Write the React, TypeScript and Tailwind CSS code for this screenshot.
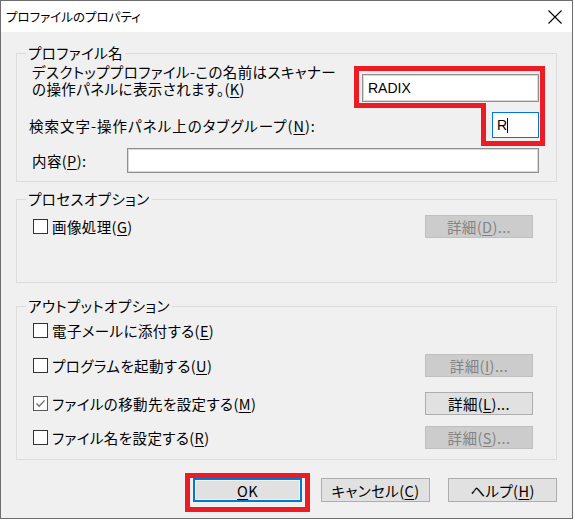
import type { ReactNode } from "react";

const font = "font-['Noto_Sans_CJK_JP','Noto_Sans',sans-serif] [font-feature-settings:'palt']";
const txt = "text-[14.5px] leading-[17px] tracking-[0.4px]";

const Mn = ({ children }: { children: ReactNode }) => (
  <u className="underline underline-offset-2 decoration-1">{children}</u>
);

const Check = ({ checked = false }: { checked?: boolean }) => (
  <span
    className={
      checked
        ? "w-[15px] h-[15px] border border-[#5a5a5a] bg-white flex items-center justify-center shrink-0"
        : "w-[15px] h-[15px] border border-[#333333] bg-white flex items-center justify-center shrink-0"
    }
  >
    {checked && (
      <svg width="11" height="11" viewBox="0 0 11 11">
        <path d="M1.5 5.5 L4.2 8.3 L9.6 2.4" fill="none" stroke="#707070" strokeWidth="1.4" />
      </svg>
    )}
  </span>
);

const DetailButton = ({ children, disabled = false }: { children: ReactNode; disabled?: boolean }) => (
  <button
    className={
      disabled
        ? "w-[108px] h-[23px] border border-[#bfbfbf] bg-[#cccccc] text-[#838383] flex items-center justify-center " + txt
        : "w-[108px] h-[23px] border border-[#adadad] bg-[#e1e1e1] text-black flex items-center justify-center " + txt
    }
  >
    {children}
  </button>
);

const OptionRow = ({
  label,
  checked,
  button,
  className,
}: {
  label: ReactNode;
  checked?: boolean;
  button?: ReactNode;
  className: string;
}) => (
  <div className={"h-[23px] flex items-center justify-between pl-[16px] pr-[23px] " + className}>
    <div className="flex items-center">
      <Check checked={checked} />
      <span className={"ml-[4px] " + txt}>{label}</span>
    </div>
    {button}
  </div>
);

const Legend = ({ children }: { children: ReactNode }) => (
  <legend className="ml-[9px] px-[2px] h-[16px] text-[14.5px] leading-[16px] tracking-[0.4px]">{children}</legend>
);

export default function App() {
  return (
    <div className={"relative w-[575px] h-[520px] bg-white text-black " + font}>
      <div className="w-[573px] h-[519px] border border-[#6d6d6d] bg-[#f0f0f0] flex flex-col">
        <div className="h-[31px] bg-white flex items-center justify-between pl-[5px] pr-[10px]">
          <span className="text-[12.5px] leading-[16px]">プロファイルのプロパティ</span>
          <svg width="14" height="14" viewBox="0 0 14 14">
            <path d="M0.5 0.5 L13.5 13.5 M13.5 0.5 L0.5 13.5" stroke="#000" strokeWidth="1.1" />
          </svg>
        </div>

        <div className="flex flex-col px-[15px]">
          <fieldset className="mt-[13px] border border-[#dcdcdc] pb-[8px]">
            <Legend>プロファイル名</Legend>
            <div className="pl-[15px] pr-[17px]">
              <div className="mt-[2px] flex items-start justify-between">
                <div className={txt}>
                  <div>デスクトッププロファイル-この名前はスキャナー</div>
                  <div>
                    の操作パネルに表示されます。(<Mn>K</Mn>)
                  </div>
                </div>
                <div className="mt-[11px] w-[177px] h-[28px] border border-[#8f8f8f] bg-white shadow-[inset_0_0_0_1px_#d9d9d9] flex items-center pl-[5px] font-['Liberation_Sans',sans-serif] text-[14px] tracking-normal">
                  RADIX
                </div>
              </div>
              <div className="mt-[10px] h-[26px] flex items-center justify-between">
                <span className="-ml-[3px] text-[14.5px] leading-[17px] tracking-[1px]">
                  検索文字-操作パネル上のタブグループ(<Mn>N</Mn>):
                </span>
                <div className="w-[47px] h-[26px] border border-[#0078d7] bg-white flex items-center pl-[4px] font-['Liberation_Sans',sans-serif] text-[14px]">
                  R<span className="w-px h-[15px] bg-black" />
                </div>
              </div>
              <div className="mt-[10px] h-[25px] flex items-center justify-between">
                <span className={txt}>
                  内容(<Mn>P</Mn>):
                </span>
                <div className="w-[412px] h-[25px] border border-[#8f8f8f] bg-white shadow-[inset_0_0_0_1px_#d9d9d9]" />
              </div>
            </div>
          </fieldset>

          <fieldset className="mt-[9px] border border-[#dcdcdc] pb-[44px]">
            <Legend>プロセスオプション</Legend>
            <OptionRow
              className="mt-[8px]"
              label={<>画像処理(<Mn>G</Mn>)</>}
              button={<DetailButton disabled>詳細(<Mn>D</Mn>)...</DetailButton>}
            />
          </fieldset>

          <fieldset className="mt-[15px] border border-[#dcdcdc] pb-[10px]">
            <Legend>アウトプットオプション</Legend>
            <OptionRow className="mt-[5px]" label={<>電子メールに添付する(<Mn>E</Mn>)</>} />
            <OptionRow
              className="mt-[12px]"
              label={<>プログラムを起動する(<Mn>U</Mn>)</>}
              button={<DetailButton disabled>詳細(<Mn>I</Mn>)...</DetailButton>}
            />
            <OptionRow
              className="mt-[15px]"
              checked
              label={<>ファイルの移動先を設定する(<Mn>M</Mn>)</>}
              button={<DetailButton>詳細(<Mn>L</Mn>)...</DetailButton>}
            />
            <OptionRow
              className="mt-[11px]"
              label={<>ファイル名を設定する(<Mn>R</Mn>)</>}
              button={<DetailButton disabled>詳細(<Mn>S</Mn>)...</DetailButton>}
            />
          </fieldset>
        </div>

        <div className="mt-[18px] flex justify-end pr-[15px] gap-[19px]">
          <button className={"w-[109px] h-[24px] border-2 border-[#0078d7] bg-[#e1e1e1] shadow-[inset_0_0_0_1px_#f2f2f2] flex items-center justify-center " + txt}>
            <Mn>O</Mn>K
          </button>
          <button className={"w-[109px] h-[24px] border border-[#adadad] bg-[#e1e1e1] flex items-center justify-center " + txt}>
            キャンセル(<Mn>C</Mn>)
          </button>
          <button className={"-ml-[1px] w-[109px] h-[24px] border border-[#adadad] bg-[#e1e1e1] flex items-center justify-center " + txt}>
            ヘルプ(<Mn>H</Mn>)
          </button>
        </div>
      </div>

      <svg className="absolute inset-0 pointer-events-none" width="575" height="520" viewBox="0 0 575 520">
        <path
          d="M356.5 68.5 H542.5 V143.5 H483.5 V105.5 H356.5 Z"
          fill="none"
          stroke="#ed1c24"
          strokeWidth="5"
        />
        <rect x="187.5" y="475.5" width="120" height="34" fill="none" stroke="#ed1c24" strokeWidth="5" />
      </svg>
    </div>
  );
}
